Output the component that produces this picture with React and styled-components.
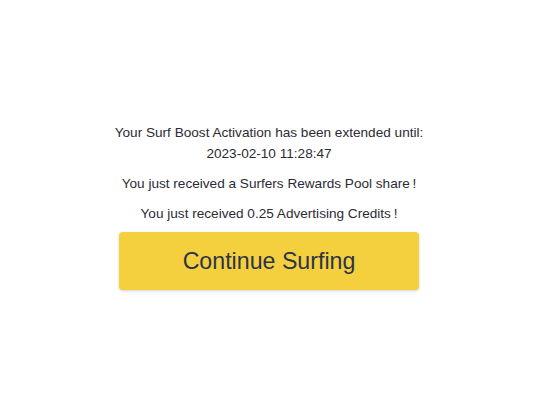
import React from 'react';
import styled, { createGlobalStyle } from 'styled-components';

const GlobalStyle = createGlobalStyle`
  body {
    margin: 0;
    background: #ffffff;
    font-family: "Liberation Sans", Arial, sans-serif;
  }
`;

const Page = styled.div`
  height: 100vh;
  display: flex;
  flex-direction: column;
  align-items: center;
  justify-content: center;
  padding-top: 5px;
  box-sizing: border-box;
`;

const Message = styled.p`
  margin: 0 0 ${(p) => p.gap || 8}px;
  font-size: 13.6px;
  line-height: 21px;
  color: #2b2b35;
  text-align: center;
`;

const Button = styled.button`
  margin-top: -1px;
  width: 300px;
  height: 58px;
  border: none;
  border-radius: 4px;
  background: #f4d03f;
  box-shadow: 0 1px 3px rgba(0, 0, 0, 0.18);
  color: #2c3447;
  font-family: "Liberation Sans", Arial, sans-serif;
  font-size: 23.2px;
  cursor: pointer;
`;

const App = () => (
  <>
    <GlobalStyle />
    <Page>
      <Message gap={9}>
        Your Surf Boost Activation has been extended until:
        <br />
        2023-02-10 11:28:47
      </Message>
      <Message gap={9}>You just received a Surfers Rewards Pool share{'\u202F'}!</Message>
      <Message gap={9}>You just received 0.25 Advertising Credits{'\u202F'}!</Message>
      <Button>Continue Surfing</Button>
    </Page>
  </>
);

export default App;
